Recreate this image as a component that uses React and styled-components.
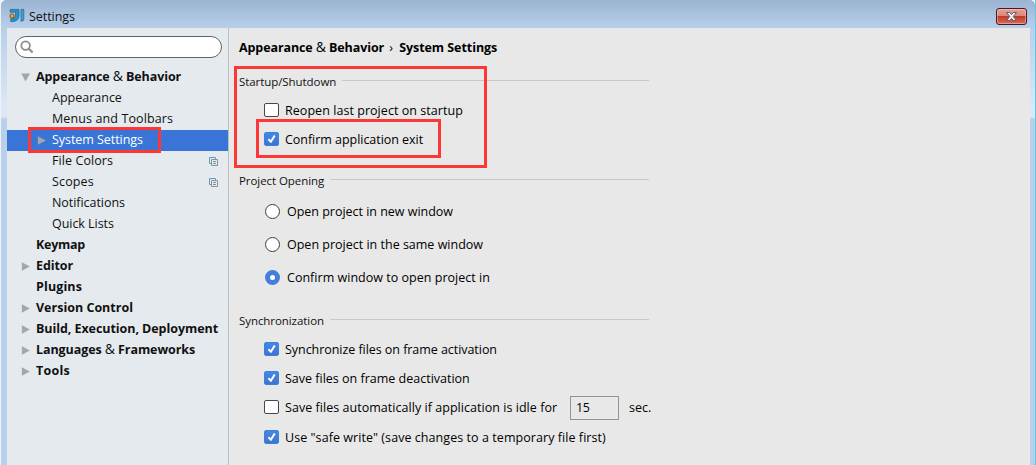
import React from "react";
import styled, { createGlobalStyle, css } from "styled-components";

const GlobalStyle = createGlobalStyle`
  *, *::before, *::after { box-sizing: border-box; }
  body {
    margin: 0;
    overflow: hidden;
    background: #fff;
    color: #111;
    font: 12.5px/17px "Open Sans", "Noto Sans", sans-serif;
    white-space: nowrap;
  }
`;

const Window = styled.div`
  position: relative;
  display: flex;
  flex-direction: column;
  height: 465px;
  padding: 0 1px;
  background: linear-gradient(90deg, #eef3f9 0 1px, transparent 1px 1035px, #5cc8e8 1035px);
`;

const TitleBar = styled.header`
  display: flex;
  align-items: flex-start;
  height: 28px;
  padding: 8px 8px 0 8px;
  border-radius: 5px 5px 0 0;
  background: linear-gradient(#9ab4d1, #b8cfea);
`;

const Title = styled.h1`
  flex: 1;
  margin: 0 0 0 4px;
  font-size: 12.5px;
  font-weight: 400;
  letter-spacing: -0.05px;
`;

const CloseButton = styled.button`
  display: flex;
  align-items: center;
  justify-content: center;
  width: 31px;
  height: 17px;
  padding: 0;
  border: 1px solid #4b1526;
  border-radius: 3px;
  background: linear-gradient(#e5a195 0, #d98577 48%, #bf3a25 50%, #d5705a 100%);
  box-shadow: inset 0 0 0 1px rgba(255, 205, 195, 0.5);
`;

const Frame = styled.div`
  display: flex;
  flex: 1;
  padding: 0 5px 0 6px;
  background: linear-gradient(#b8cfea 0, #dce8f5 80px, #dce8f5 89px, #b9d0ea 91px);
`;

const Sidebar = styled.nav`
  display: flex;
  flex-direction: column;
  width: 222px;
  padding-top: 8px;
  border-right: 1px solid #bcc0c4;
  background: #e5eaee;
`;

const SearchBox = styled.div`
  display: flex;
  align-items: center;
  width: 207px;
  height: 22px;
  margin: 0 0 9px 8px;
  padding-left: 4px;
  border: 1px solid #636363;
  border-radius: 11px;
  background: #fff;
`;

const TreeRow = styled.div`
  display: flex;
  align-items: center;
  height: 21px;
  padding: 0 10px 0 ${(p) => (p.$child ? 30 : 14)}px;
  ${(p) => p.$selected && css`
    background: #3975d7;
    color: #fff;
  `}
`;

const ArrowSlot = styled.span`
  display: flex;
  width: 15px;
`;

const TreeLabel = styled.span`
  flex: 1;
  padding-bottom: 2px;
  font-weight: ${(p) => (p.$bold ? 700 : 400)};
  letter-spacing: ${(p) => p.$track || 0}px;
`;

const Ampersand = styled.span`
  font-size: 14px;
  font-weight: 400;
  line-height: 1;
`;

const Main = styled.main`
  display: flex;
  flex: 1;
  flex-direction: column;
  gap: 19px;
  padding: 11px 0 0 10px;
  background: #e8e8e8;
`;

const Breadcrumb = styled.div`
  display: flex;
  height: 16px;
  color: #000;
  font-weight: 700;
  letter-spacing: -0.06px;
`;

const Crumb = styled.span`
  letter-spacing: ${(p) => p.$track || 0}px;
`;

const Chevron = styled.span`
  width: 15px;
  padding-left: 5px;
  font-weight: 400;
`;

const Section = styled.section`
  display: flex;
  flex-direction: column;
  width: 410px;
`;

const SectionHeader = styled.div`
  display: flex;
  gap: 6px;
  height: 16px;
  margin-bottom: 6px;
  font-size: 11.5px;
  line-height: 16px;
  letter-spacing: -0.07px;

  &::after {
    content: "";
    flex: 1;
    height: 1px;
    margin-top: 6px;
    background: #c9c9c9;
  }
`;

const Option = styled.label`
  display: flex;
  align-items: center;
  height: ${(p) => (p.$radio ? 33 : 29)}px;
  margin-top: ${(p) => p.$offset || 0}px;
  padding-left: 25px;
  color: #000;
  letter-spacing: ${(p) => p.$track || 0}px;
`;

const CheckMark = styled.span`
  display: flex;
  flex: none;
  width: 15px;
  height: 14px;
  margin: 0 6px 1px 0;
  border: 1px solid ${(p) => (p.$on ? "#3a80dc" : "#474747")};
  border-radius: 2px;
  background: ${(p) => (p.$on ? "linear-gradient(#4787e6, #3e74cf)" : "#fff")};
`;

const RadioMark = styled.span`
  flex: none;
  width: 15px;
  height: 15px;
  margin: 0 7px 0 1px;
  border: ${(p) => (p.$on ? "5px solid #437edb" : "1px solid #3c3c3c")};
  border-radius: 50%;
  background: #fff;
`;

const IdleText = styled.span`
  flex: none;
  width: 285px;
`;

const SecondsInput = styled.span`
  flex: none;
  width: 49px;
  height: 24px;
  margin-right: 10px;
  padding: 2px 0 0 5px;
  border: 1px solid #949494;
  letter-spacing: -0.4px;
`;

const Highlight = styled.div`
  position: absolute;
  left: ${(p) => p.$x}px;
  top: ${(p) => p.$y}px;
  width: ${(p) => p.$w}px;
  height: ${(p) => p.$h}px;
  border: 3px solid #fd3636;
`;

const Logo = () => (
  <svg width="16" height="16" viewBox="0 0 16 16">
    <path d="M1.2 1.4H10V7.5Q10 13 4 13.6H1.8V10.8Q6.6 10.6 6.6 7V4.2H1.2Z" fill="#2c91c6" stroke="#1b6392" strokeWidth=".7" />
    <path d="M12 1.4H14.8V12.2L12 13.4Z" fill="#3ba6d8" stroke="#1b6392" strokeWidth=".7" />
    <circle cx="3" cy="8" r="2.5" fill="#7c5020" />
    <circle cx="3" cy="8" r="1.7" fill="#f3a62a" />
  </svg>
);

const CloseGlyph = () => (
  <svg width="13" height="11" viewBox="0 0 13 11">
    <path d="M1.5 1.5H4.6L6.5 3.6L8.4 1.5H11.5L8.2 5.5L11.5 9.5H8.4L6.5 7.4L4.6 9.5H1.5L4.8 5.5Z" fill="#f4f4f6" stroke="#596076" strokeWidth="1" />
  </svg>
);

const SearchIcon = () => (
  <svg width="14" height="14" viewBox="0 0 14 14" fill="none" stroke="#8c8c8c">
    <circle cx="5.6" cy="5.6" r="4.3" strokeWidth="1.8" />
    <path d="M8.8 8.8L12.6 12.5" strokeWidth="2.2" />
  </svg>
);

const Arrow = ({ open }) => (
  <svg width="9" height="9" viewBox="0 0 9 9">
    <path d={open ? "M.2 .5H9L4.6 8.5Z" : "M.9 .3V8.7L8.8 4.5Z"} fill="#a6a6a6" />
  </svg>
);

const CopyIcon = () => (
  <svg width="9" height="9" viewBox="0 0 9 9" fill="none">
    <path d="M2 6.5H.5V.5H6.5V2" stroke="#5c9cbd" />
    <path d="M2.5 2.5H8.5V8.5H2.5ZM4 4.5H7M4 6.5H7" stroke="#8b9094" />
  </svg>
);

const Tick = () => (
  <svg width="13" height="12" viewBox="0 0 13 12">
    <path d="M3.4 6.2L5.9 8.7L9.7 2.4" fill="none" stroke="#fff" strokeWidth="2" />
  </svg>
);

const tree = [
  { label: ["Appearance ", "&", " Behavior"], arrow: "open", track: -0.1 },
  { label: "Appearance", child: true },
  { label: "Menus and Toolbars", child: true, track: 0.11 },
  { label: "System Settings", child: true, arrow: "closed", selected: true, track: -0.05 },
  { label: "File Colors", child: true, shared: true, track: 0.08 },
  { label: "Scopes", child: true, shared: true, track: 0.15 },
  { label: "Notifications", child: true, track: -0.05 },
  { label: "Quick Lists", child: true, track: -0.04 },
  { label: "Keymap", track: -0.26 },
  { label: "Editor", arrow: "closed", track: -0.09 },
  { label: "Plugins", track: 0.12 },
  { label: "Version Control", arrow: "closed" },
  { label: "Build, Execution, Deployment", arrow: "closed", track: -0.06 },
  { label: ["Languages ", "&", " Frameworks"], arrow: "closed", track: -0.08 },
  { label: "Tools", arrow: "closed", track: 0.25 },
];

const Label = ({ parts }) =>
  Array.isArray(parts) ? (
    <>{parts[0]}<Ampersand>{parts[1]}</Ampersand>{parts[2]}</>
  ) : parts;

const Check = ({ on, children, track, offset }) => (
  <Option $track={track} $offset={offset}>
    <CheckMark $on={on}>{on && <Tick />}</CheckMark>
    {children}
  </Option>
);

const Radio = ({ on, children, track }) => (
  <Option $radio $track={track}>
    <RadioMark $on={on} />
    {children}
  </Option>
);

export default function App() {
  return (
    <>
      <GlobalStyle />
      <Window>
        <TitleBar>
          <Logo />
          <Title>Settings</Title>
          <CloseButton aria-label="Close"><CloseGlyph /></CloseButton>
        </TitleBar>
        <Frame>
          <Sidebar>
            <SearchBox><SearchIcon /></SearchBox>
            {tree.map((item, i) => (
              <TreeRow key={i} $child={item.child} $selected={item.selected}>
                <ArrowSlot>{item.arrow && <Arrow open={item.arrow === "open"} />}</ArrowSlot>
                <TreeLabel $bold={!item.child} $track={item.track}><Label parts={item.label} /></TreeLabel>
                {item.shared && <CopyIcon />}
              </TreeRow>
            ))}
          </Sidebar>
          <Main>
            <Breadcrumb>
              <Crumb $track={-0.1}>Appearance <Ampersand>&amp;</Ampersand> Behavior</Crumb>
              <Chevron>›</Chevron>
              <Crumb $track={-0.06}>System Settings</Crumb>
            </Breadcrumb>
            <Section>
              <SectionHeader>Startup/Shutdown</SectionHeader>
              <Check track={0.05}>Reopen last project on startup</Check>
              <Check on track={-0.04}>Confirm application exit</Check>
            </Section>
            <Section>
              <SectionHeader>Project Opening</SectionHeader>
              <Radio track={-0.02}>Open project in new window</Radio>
              <Radio>Open project in the same window</Radio>
              <Radio on track={0.02}>Confirm window to open project in</Radio>
            </Section>
            <Section>
              <SectionHeader>Synchronization</SectionHeader>
              <Check on track={-0.05}>Synchronize files on frame activation</Check>
              <Check on>Save files on frame deactivation</Check>
              <Check track={0.04}>
                <IdleText>Save files automatically if application is idle for</IdleText>
                <SecondsInput>15</SecondsInput>
                <span>sec.</span>
              </Check>
              <Check on track={0.06} offset={1}>Use "safe write" (save changes to a temporary file first)</Check>
            </Section>
          </Main>
        </Frame>
        <Highlight $x={28} $y={127} $w={133} $h={26} />
        <Highlight $x={234} $y={66} $w={253} $h={102} />
        <Highlight $x={256} $y={119} $w={185} $h={39} />
      </Window>
    </>
  );
}
